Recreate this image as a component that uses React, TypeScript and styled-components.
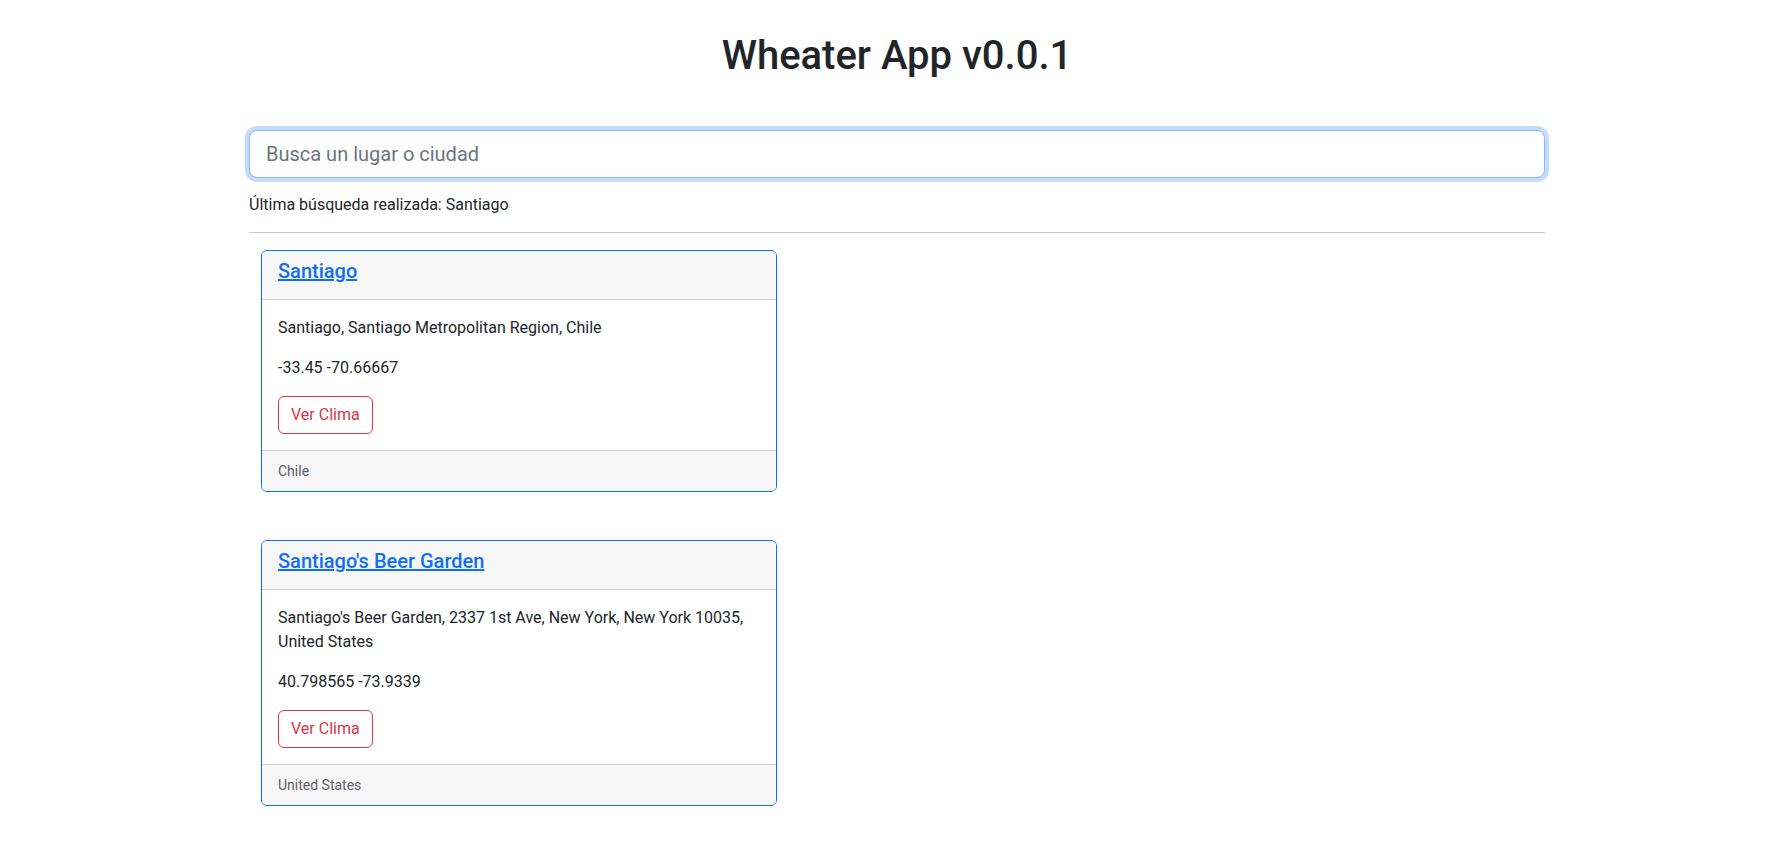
import styled, { createGlobalStyle } from "styled-components";

const GlobalStyle = createGlobalStyle`
  *, *::before, *::after {
    box-sizing: border-box;
  }

  body {
    margin: 0;
    background: #fff;
    color: #212529;
    font-family: Roboto, "Liberation Sans", sans-serif;
    font-size: 16px;
    line-height: 1.5;
  }
`;

type Place = {
  name: string;
  address: string;
  lat: string;
  lng: string;
  country: string;
};

const places: Place[] = [
  {
    name: "Santiago",
    address: "Santiago, Santiago Metropolitan Region, Chile",
    lat: "-33.45",
    lng: "-70.66667",
    country: "Chile",
  },
  {
    name: "Santiago's Beer Garden",
    address:
      "Santiago's Beer Garden, 2337 1st Ave, New York, New York 10035, United States",
    lat: "40.798565",
    lng: "-73.9339",
    country: "United States",
  },
];

const Page = styled.div`
  padding: 32px 0 40px 16px;
`;

const Container = styled.main`
  max-width: 1320px;
  margin: 0 auto;
  padding: 0 12px;
`;

const Title = styled.h1`
  margin: 0 0 50px;
  text-align: center;
  font-size: 40px;
  font-weight: 500;
  line-height: 1.2;
`;

const SearchInput = styled.input`
  display: block;
  width: 100%;
  height: 48px;
  padding: 8px 16px;
  font-family: inherit;
  font-size: 20px;
  line-height: 1.5;
  color: #212529;
  background: #fff;
  border: 1px solid #86b7fe;
  border-radius: 8px;
  outline: 0;
  box-shadow: 0 0 0 4px rgba(13, 110, 253, 0.25);

  &::placeholder {
    color: #6c757d;
  }
`;

const LastSearch = styled.p`
  margin: 15px 0 0;
`;

const Divider = styled.hr`
  margin: 15px 0 17px;
  border: 0;
  border-top: 1px solid #c8c9ca;
`;

const CardList = styled.section`
  display: flex;
  flex-direction: column;
  align-items: flex-start;
  gap: 48px;
  padding-left: 12px;
`;

const Card = styled.article`
  width: 516px;
  border: 1px solid #0d6efd;
  border-radius: 6px;
  overflow: hidden;
`;

const CardHeader = styled.header`
  padding: 8px 16px;
  background: #f7f7f7;
  border-bottom: 1px solid #d2d2d2;

  h5 {
    margin: 0 0 8px;
    font-size: 20px;
    font-weight: 500;
    line-height: 1.2;
  }

  a {
    color: #0d6efd;
    text-decoration: underline;
  }
`;

const CardBody = styled.div`
  padding: 16px;

  p {
    margin: 0 0 16px;
  }
`;

const OutlineButton = styled.button`
  display: inline-block;
  height: 38px;
  padding: 6px 12px;
  font-family: inherit;
  font-size: 16px;
  line-height: 1.5;
  color: #dc3545;
  background: transparent;
  border: 1px solid #dc3545;
  border-radius: 6px;
  cursor: pointer;
`;

const CardFooter = styled.footer`
  padding: 8px 16px;
  background: #f7f7f7;
  border-top: 1px solid #d2d2d2;
  color: #5c6166;
  font-size: 14px;
  line-height: 24px;
`;

const App = () => {
  return (
    <Page>
      <GlobalStyle />
      <Container>
        <Title>Wheater App v0.0.1</Title>
        <SearchInput autoFocus placeholder="Busca un lugar o ciudad" />
        <LastSearch>Última búsqueda realizada: Santiago</LastSearch>
        <Divider />
        <CardList>
          {places.map((place) => (
            <Card key={place.name}>
              <CardHeader>
                <h5>
                  <a href="#">{place.name}</a>
                </h5>
              </CardHeader>
              <CardBody>
                <p>{place.address}</p>
                <p>
                  {place.lat} {place.lng}
                </p>
                <OutlineButton>Ver Clima</OutlineButton>
              </CardBody>
              <CardFooter>{place.country}</CardFooter>
            </Card>
          ))}
        </CardList>
      </Container>
    </Page>
  );
};

export default App;
